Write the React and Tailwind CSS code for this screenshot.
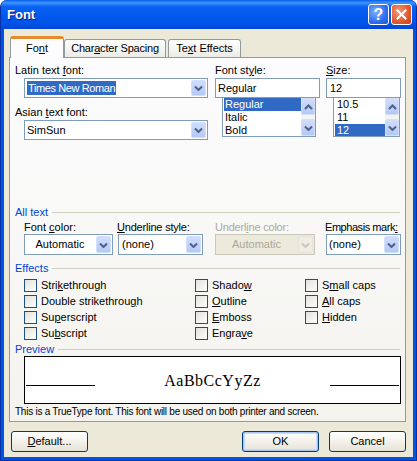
import React from "react";

const Chev = ({ up, color = "#4D6185" }) => (
  <svg width="9" height="6" viewBox="0 0 9 6">
    <path d={up ? "M1 5 L4.5 1.5 L8 5" : "M1 1.5 L4.5 5 L8 1.5"} stroke={color} strokeWidth="2" fill="none" />
  </svg>
);

const ArrowBtn = ({ disabled }) => (
  <div
    className={
      disabled
        ? "w-[15px] m-[1px] self-stretch rounded-[2px] border border-[#E6E4DA] bg-[#EEEDE5] flex items-center justify-center"
        : "w-[15px] m-[1px] self-stretch rounded-[2px] border border-[#D2DEFB] bg-gradient-to-b from-[#D0DDFC] to-[#B4C8F6] flex items-center justify-center"
    }
  >
    <Chev color={disabled ? "#C9C7BA" : "#4D6185"} />
  </div>
);

const ScrollBtn = ({ up }) => (
  <div className="h-[17px] w-full rounded-[2px] border border-[#D2DEFB] bg-gradient-to-b from-[#D0DDFC] to-[#B4C8F6] flex items-center justify-center">
    <Chev up={up} />
  </div>
);

const Checkbox = ({ children }) => (
  <div className="flex items-center h-[13px]">
    <div className="w-[13px] h-[13px] border border-[#1C5180] bg-gradient-to-br from-[#E2E1DA] to-white shrink-0" />
    <span className="ml-[4px] whitespace-nowrap">{children}</span>
  </div>
);

const GroupHeader = ({ children }) => (
  <div className="flex items-center ml-[5px] mr-[5px] h-[13px]">
    <span className="text-[#0046D5] whitespace-nowrap">{children}</span>
    <div className="flex-1 h-px bg-[#D0D0BF] ml-[4px]" />
  </div>
);

const Button = ({ children, def, className }) => (
  <div
    className={`${className} h-[21px] rounded-[3px] border border-[#003C74] bg-gradient-to-b from-white to-[#E6E3D6] flex items-center justify-center ${
      def ? "shadow-[inset_0_0_0_1px_#A9C4F0,inset_0_0_0_2px_#C9DAF6]" : ""
    }`}
  >
    {children}
  </div>
);

export default function App() {
  return (
    <div className="w-[417px] h-[461px] font-['Liberation_Sans',Arial,sans-serif] text-[11px] leading-[13px] text-black">
      <div className="w-full h-full flex flex-col rounded-t-[7px] bg-[#0054E3] border-x border-b border-[#0831A9] overflow-hidden">
        {/* Title bar */}
        <div className="h-[29px] flex items-center pl-[6px] pr-[4px] bg-[linear-gradient(to_bottom,#0A5FE8_0%,#3D95FF_10%,#0A62F2_22%,#0058EE_55%,#0054E8_80%,#0047D4_100%)]">
          <span className="text-white font-bold text-[13px] leading-[16px] [text-shadow:1px_1px_0_#0A1E80]">Font</span>
          <div className="ml-auto flex gap-[2px]">
            <div className="w-[21px] h-[21px] rounded-[3px] border border-white bg-[radial-gradient(circle_at_35%_35%,#7FB0FF_0%,#2E6EF0_60%,#1F56D6_100%)] flex items-center justify-center">
              <span className="text-white font-bold text-[16px] leading-[16px]">?</span>
            </div>
            <div className="w-[21px] h-[21px] rounded-[3px] border border-white bg-[radial-gradient(circle_at_35%_35%,#F29A78_0%,#E2582C_60%,#C8401C_100%)] flex items-center justify-center">
              <svg width="11" height="11" viewBox="0 0 11 11">
                <path d="M1.5 1.5 L9.5 9.5 M9.5 1.5 L1.5 9.5" stroke="white" strokeWidth="2" strokeLinecap="square" />
              </svg>
            </div>
          </div>
        </div>

        {/* Body */}
        <div className="flex-1 mx-[3px] mb-[3px] bg-[#ECE9D8] flex flex-col">
          {/* Tabs */}
          <div className="flex items-end h-[21px] mt-[7px] ml-[6px] relative z-10">
            <div className="w-[54px] h-[22px] -mb-[1px] border-x border-[#919B9C] border-t-[3px] border-t-[#E68B2C] rounded-t-[3px] bg-[#FCFCFE] flex items-center justify-center pb-[1px]">
              Fo<u>n</u>t
            </div>
            <div className="w-[102px] h-[18px] border border-b-0 border-[#919B9C] rounded-t-[3px] bg-gradient-to-b from-white to-[#ECEBE6] flex items-center justify-center tracking-[-0.2px]">
              Char<u>a</u>cter Spacing
            </div>
            <div className="ml-[2px] w-[73px] h-[18px] border border-b-0 border-[#919B9C] rounded-t-[3px] bg-gradient-to-b from-white to-[#ECEBE6] flex items-center justify-center">
              Te<u>x</u>t Effects
            </div>
          </div>

          {/* Panel */}
          <div className="ml-[5px] w-[397px] h-[365px] border border-[#919B9C] bg-gradient-to-b from-[#FCFCFE] to-[#F4F3EE] flex flex-col">
            {/* Top section */}
            <div className="flex mt-[6px]">
              <div className="ml-[5px] w-[194px] flex flex-col">
                <div className="h-[13px]">Latin text <u>f</u>ont:</div>
                <div className="ml-[9px] mt-[1px] w-[184px] h-[20px] border border-[#7F9DB9] bg-white flex">
                  <div className="flex-1 flex items-center pl-[2px]">
                    <span className="bg-[#316AC5] text-white px-[1px] leading-[14px] tracking-[-0.4px]">Times New Roman</span>
                  </div>
                  <ArrowBtn />
                </div>
                <div className="h-[13px] mt-[8px]">Asian <u>t</u>ext font:</div>
                <div className="ml-[9px] mt-[1px] w-[184px] h-[20px] border border-[#7F9DB9] bg-white flex">
                  <div className="flex-1 flex items-center pl-[2px]">SimSun</div>
                  <ArrowBtn />
                </div>
              </div>

              <div className="ml-[6px] w-[105px] flex flex-col">
                <div className="h-[13px]">Font st<u>y</u>le:</div>
                <div className="mt-[1px] w-full h-[20px] border border-[#7F9DB9] bg-white flex items-center pl-[2px]">Regular</div>
                <div className="ml-[7px] -mt-[1px] w-[94px] h-[40px] border border-[#7F9DB9] bg-white flex overflow-hidden">
                  <div className="flex-1 flex flex-col">
                    <div className="h-[13px] bg-[#316AC5] text-white pl-[1px] ml-[1px]">Regular</div>
                    <div className="h-[13px] pl-[2px]">Italic</div>
                    <div className="h-[12px] pl-[2px]">Bold</div>
                  </div>
                  <div className="w-[14px] flex flex-col justify-between bg-[#F5F4EF]">
                    <ScrollBtn up />
                    <ScrollBtn />
                  </div>
                </div>
              </div>

              <div className="ml-[6px] w-[75px] flex flex-col">
                <div className="h-[13px]"><u>S</u>ize:</div>
                <div className="mt-[1px] w-full h-[20px] border border-[#7F9DB9] bg-white flex items-center pl-[3px]">12</div>
                <div className="ml-[7px] -mt-[1px] w-[67px] h-[40px] border border-[#7F9DB9] bg-white flex overflow-hidden">
                  <div className="flex-1 flex flex-col">
                    <div className="h-[13px] pl-[3px]">10.5</div>
                    <div className="h-[13px] pl-[3px]">11</div>
                    <div className="h-[12px] bg-[#316AC5] text-white pl-[2px] ml-[1px]">12</div>
                  </div>
                  <div className="w-[14px] flex flex-col justify-between bg-[#F5F4EF]">
                    <ScrollBtn up />
                    <ScrollBtn />
                  </div>
                </div>
              </div>
            </div>

            {/* All text */}
            <div className="mt-[66px]">
              <GroupHeader>All text</GroupHeader>
            </div>
            <div className="flex mt-[2px]">
              <div className="ml-[14px] w-[89px] flex flex-col">
                <div className="h-[13px] whitespace-nowrap">Font <u>c</u>olor:</div>
                <div className="h-[21px] border border-[#7F9DB9] bg-white flex">
                  <div className="flex-1 flex items-center justify-center">Automatic</div>
                  <ArrowBtn />
                </div>
              </div>
              <div className="ml-[5px] w-[85px] flex flex-col">
                <div className="h-[13px] whitespace-nowrap -ml-[1px] tracking-[-0.2px]"><u>U</u>nderline style:</div>
                <div className="h-[21px] border border-[#7F9DB9] bg-white flex">
                  <div className="flex-1 flex items-center pl-[3px]">(none)</div>
                  <ArrowBtn />
                </div>
              </div>
              <div className="ml-[12px] w-[100px] flex flex-col">
                <div className="h-[13px] whitespace-nowrap text-[#ACA899] tracking-[-0.2px]">Underl<u>i</u>ne color:</div>
                <div className="h-[21px] border border-[#C9C7BA] bg-[#EBEADB] flex">
                  <div className="flex-1 flex items-center justify-center text-[#ACA899]">Automatic</div>
                  <ArrowBtn disabled />
                </div>
              </div>
              <div className="ml-[11px] w-[75px] flex flex-col">
                <div className="h-[13px] whitespace-nowrap -ml-[1px] tracking-[-0.45px]">Emphasis mark<u>:</u></div>
                <div className="h-[21px] border border-[#7F9DB9] bg-white flex">
                  <div className="flex-1 flex items-center pl-[2px]">(none)</div>
                  <ArrowBtn />
                </div>
              </div>
            </div>

            {/* Effects */}
            <div className="mt-[7px]">
              <GroupHeader>Effects</GroupHeader>
            </div>
            <div className="flex mt-[4px] ml-[14px]">
              <div className="w-[171px] flex flex-col gap-[3px]">
                <Checkbox>Stri<u>k</u>ethrough</Checkbox>
                <Checkbox>Double strikethrou<u>g</u>h</Checkbox>
                <Checkbox>Su<u>p</u>erscript</Checkbox>
                <Checkbox>Su<u>b</u>script</Checkbox>
              </div>
              <div className="w-[110px] flex flex-col gap-[3px]">
                <Checkbox>Shado<u>w</u></Checkbox>
                <Checkbox><u>O</u>utline</Checkbox>
                <Checkbox><u>E</u>mboss</Checkbox>
                <Checkbox>Engra<u>v</u>e</Checkbox>
              </div>
              <div className="flex flex-col gap-[3px]">
                <Checkbox>S<u>m</u>all caps</Checkbox>
                <Checkbox><u>A</u>ll caps</Checkbox>
                <Checkbox><u>H</u>idden</Checkbox>
              </div>
            </div>

            {/* Preview */}
            <div className="mt-[3px]">
              <GroupHeader>Preview</GroupHeader>
            </div>
            <div className="ml-[14px] w-[377px] h-[48px] border border-black bg-white flex items-baseline pt-[15px] px-[1px]">
              <div className="w-[69px] h-px bg-black" />
              <div className="flex-1 text-center font-['Liberation_Serif','Times_New_Roman',serif] text-[16px] leading-[18px] tracking-[0.5px]">
                AaBbCcYyZz
              </div>
              <div className="w-[69px] h-px bg-black" />
            </div>
            <div className="ml-[5px] mt-[1px] h-[13px] whitespace-nowrap text-[10px] tracking-[-0.25px]">
              This is a TrueType font. This font will be used on both printer and screen.
            </div>
          </div>

          {/* Buttons */}
          <div className="flex mt-[9px] px-[7px]">
            <Button className="w-[77px]"><span><u>D</u>efault...</span></Button>
            <Button def className="w-[77px] ml-auto">OK</Button>
            <Button className="w-[77px] ml-[10px]">Cancel</Button>
          </div>
        </div>
      </div>
    </div>
  );
}
